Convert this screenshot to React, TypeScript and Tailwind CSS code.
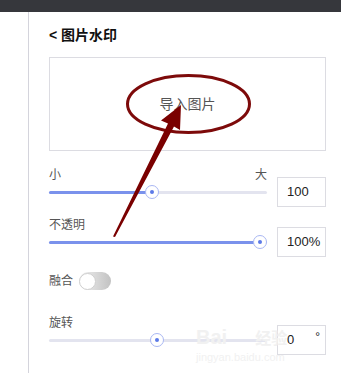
const font = { fontFamily: '"Liberation Sans", "Noto Sans CJK SC", sans-serif' };

function Slider({ pos, fill }: { pos: string; fill: boolean }) {
  return (
    <div className="relative flex-1 h-[30px] flex items-center">
      <div className="w-full h-[3px] rounded-full bg-[#e3e4ef]" />
      {fill && (
        <div className={`absolute left-0 h-[3px] rounded-full bg-[#7a92ec] ${pos === "mid" ? "w-[103px]" : "w-[211px]"}`} />
      )}
      <div
        className={`absolute top-[8px] w-[14px] h-[14px] rounded-full bg-white border border-[#a9b7f3] flex items-center justify-center ${
          pos === "mid" ? "left-[96px]" : pos === "end" ? "left-[204px]" : "left-[101px]"
        }`}
      >
        <div className="w-[4px] h-[4px] rounded-full bg-[#5c7ae8]" />
      </div>
    </div>
  );
}

function Box({ children }: { children: React.ReactNode }) {
  return (
    <div className="w-[49px] h-[30px] border border-[#dcdce2] flex items-center pl-[9px] text-[13px] text-[#222]">
      {children}
    </div>
  );
}

export default function App() {
  return (
    <div className="relative w-[341px] h-[373px] bg-white overflow-hidden" style={font}>
      <div className="h-[12px] bg-[#36373c]" />
      <div className="flex h-[361px]">
        <div className="w-[29px] border-r border-[#d4d4dc]" />
        <div className="flex-1 pl-[20px] pr-[15px]">
          <div className="mt-[15px] h-[16px] leading-[16px] text-[14px] font-bold text-[#111]">&lt; 图片水印</div>

          <div className="mt-[14px] h-[94px] border border-[#dcdce2] flex items-center justify-center text-[14px] text-[#555]">
            导入图片
          </div>

          <div className="mt-[18px] mb-[-4px] mr-[59px] flex justify-between leading-[12px] text-[12px] text-[#555]">
            <span>小</span>
            <span>大</span>
          </div>
          <div className="flex items-center gap-[10px]">
            <Slider pos="mid" fill />
            <Box>100</Box>
          </div>

          <div className="mt-[12px] mb-[-4px] leading-[12px] text-[12px] text-[#555]">不透明</div>
          <div className="flex items-center gap-[10px]">
            <Slider pos="end" fill />
            <Box>100%</Box>
          </div>

          <div className="mt-[15px] flex items-center gap-[6px] text-[12px] text-[#555]">
            <span>融合</span>
            <div className="w-[32px] h-[18px] rounded-full bg-gradient-to-r from-[#f2f2f2] to-[#c2c2c2] flex items-center">
              <div className="w-[17px] h-[17px] rounded-full bg-white border border-[#cfcfcf]" />
            </div>
          </div>

          <div className="mt-[27px] mb-[-4px] leading-[12px] text-[12px] text-[#555]">旋转</div>
          <div className="flex items-center gap-[10px]">
            <Slider pos="rot" fill={false} />
            <div className="w-[49px] h-[30px] border border-[#dcdce2] flex items-center justify-between pl-[9px] pr-[5px] text-[13px] text-[#222]">
              <span>0</span>
              <span className="text-[12px] mb-[6px]">°</span>
            </div>
          </div>
        </div>
      </div>

      <div className="absolute left-[196px] top-[327px] text-[20px] font-bold text-[#f1f1f1] leading-none pointer-events-none">
        Bai<span className="text-[16px] ml-[28px]">经验</span>
      </div>
      <div className="absolute left-[196px] top-[352px] text-[11px] text-[#f1f1f1] leading-none pointer-events-none">
        jingyan.baidu.com
      </div>

      <svg className="absolute left-0 top-0 pointer-events-none" width="341" height="373" viewBox="0 0 341 373">
        <ellipse cx="188.5" cy="104" rx="61" ry="28.5" fill="none" stroke="#7d0a0a" strokeWidth="3" />
        <polygon
          points="181,105 180,130 174,126.6 115,237 113,236.5 168,123.4 161,120.5"
          fill="#7a0000"
        />
      </svg>
    </div>
  );
}
